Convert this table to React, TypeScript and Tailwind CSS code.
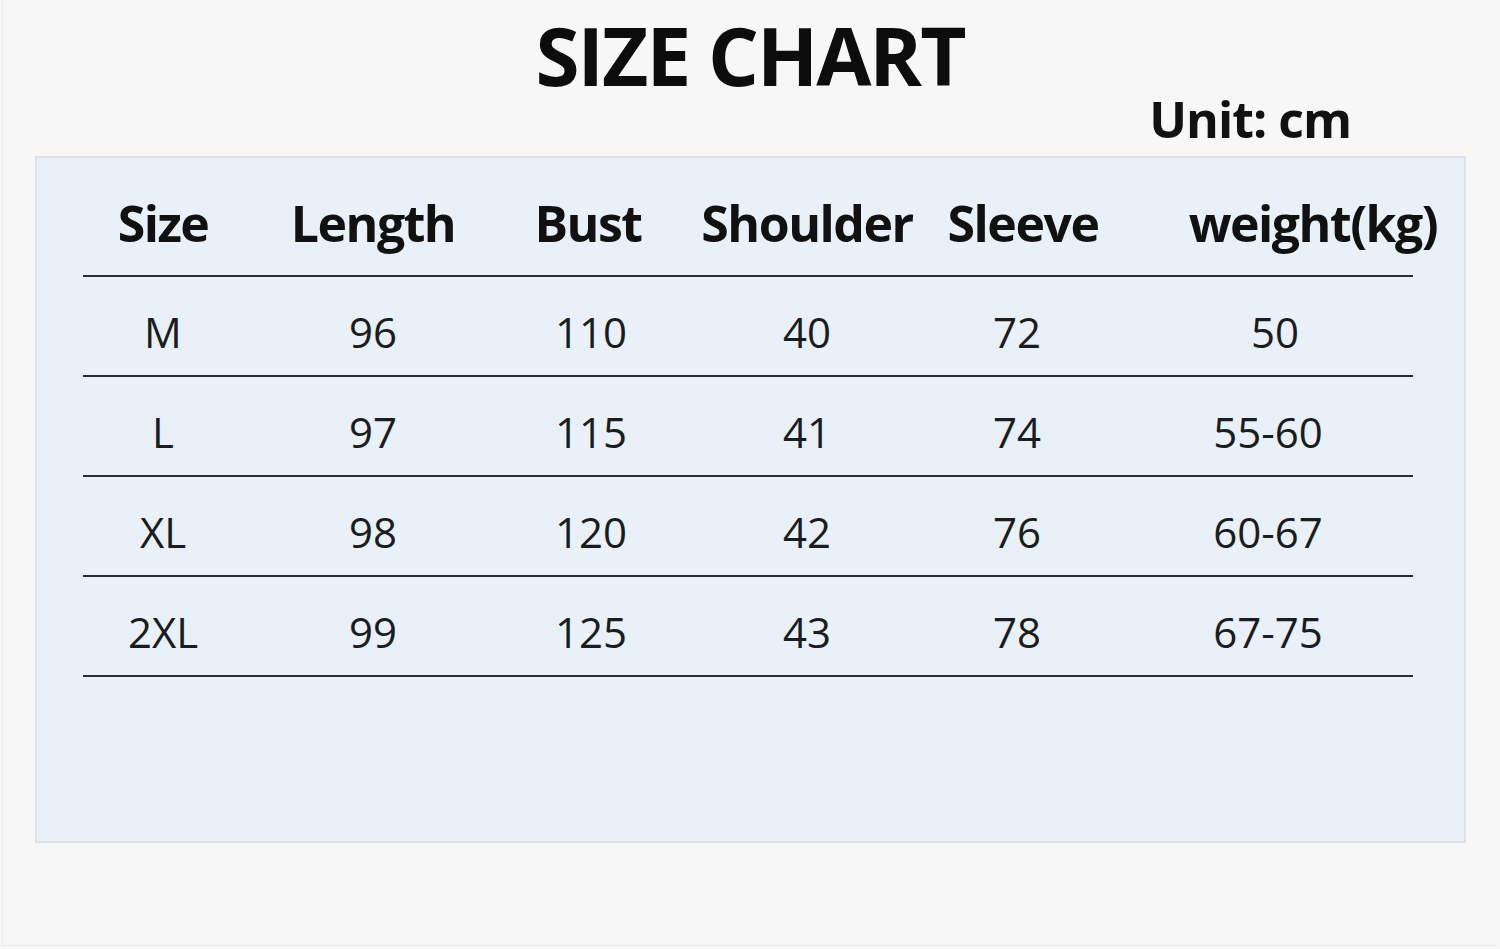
const headers = [
  { label: "Size", cls: "" },
  { label: "Length", cls: "" },
  { label: "Bust", cls: "pr-[6px]" },
  { label: "Shoulder", cls: "" },
  { label: "Sleeve", cls: "pl-[12px]" },
  { label: "weight(kg)", cls: "pl-[114px]" },
];

const rows = [
  ["M", "96", "110", "40", "72", "50"],
  ["L", "97", "115", "41", "74", "55-60"],
  ["XL", "98", "120", "42", "76", "60-67"],
  ["2XL", "99", "125", "43", "78", "67-75"],
];

// column widths, summed = 1330 (the rule width)
const cols = "grid grid-cols-[160px_260px_176px_256px_164px_314px]";

export default function App() {
  return (
    <div
      className="w-[1500px] h-[949px] bg-[#f7f7f7] text-[#111] overflow-hidden"
      style={{ fontFamily: '"Open Sans", "Noto Sans", sans-serif' }}
    >
      <div className="h-[946px] ml-[2px] mr-[3px] border-l border-b border-[#ebebeb] flex flex-col">
        {/* TITLE */}
        <h1 className="mt-[12px] text-center text-[80px] font-bold leading-[86px] tracking-[-2px] text-[#0d0d0d]">
          SIZE CHART
        </h1>
        <div className="flex justify-end pr-[146px] -mt-[9px]">
          <span className="text-[50px] font-bold leading-[60px] tracking-[-1px]">
            Unit: cm
          </span>
        </div>

        {/* PANEL */}
        <div className="mt-[7px] ml-[32px] w-[1431px] h-[687px] bg-[#e9f0f8] border-2 border-[#dfe3e7]">
          <div className="ml-[46px] w-[1330px]">
            <div className={`${cols} h-[119px] items-center pt-[12px] border-b-2 border-[#2b3034]`}>
              {headers.map((h) => (
                <div
                  key={h.label}
                  className={`flex justify-center whitespace-nowrap text-[50px] font-bold tracking-[-1.5px] leading-none ${h.cls}`}
                >
                  <span>{h.label}</span>
                </div>
              ))}
            </div>
            {rows.map((r) => (
              <div
                key={r[0]}
                className={`${cols} h-[100px] items-center border-b-2 border-[#2b3034] text-[#1a1d20]`}
              >
                {r.map((v, i) => (
                  <div
                    key={i}
                    className={`text-center whitespace-nowrap text-[42px] leading-none pt-[12px] ${
                      i === 5 ? (v === "50" ? "pl-[38px]" : "pl-[24px]") : ""
                    }`}
                  >
                    {v}
                  </div>
                ))}
              </div>
            ))}
          </div>
        </div>
      </div>
    </div>
  );
}
